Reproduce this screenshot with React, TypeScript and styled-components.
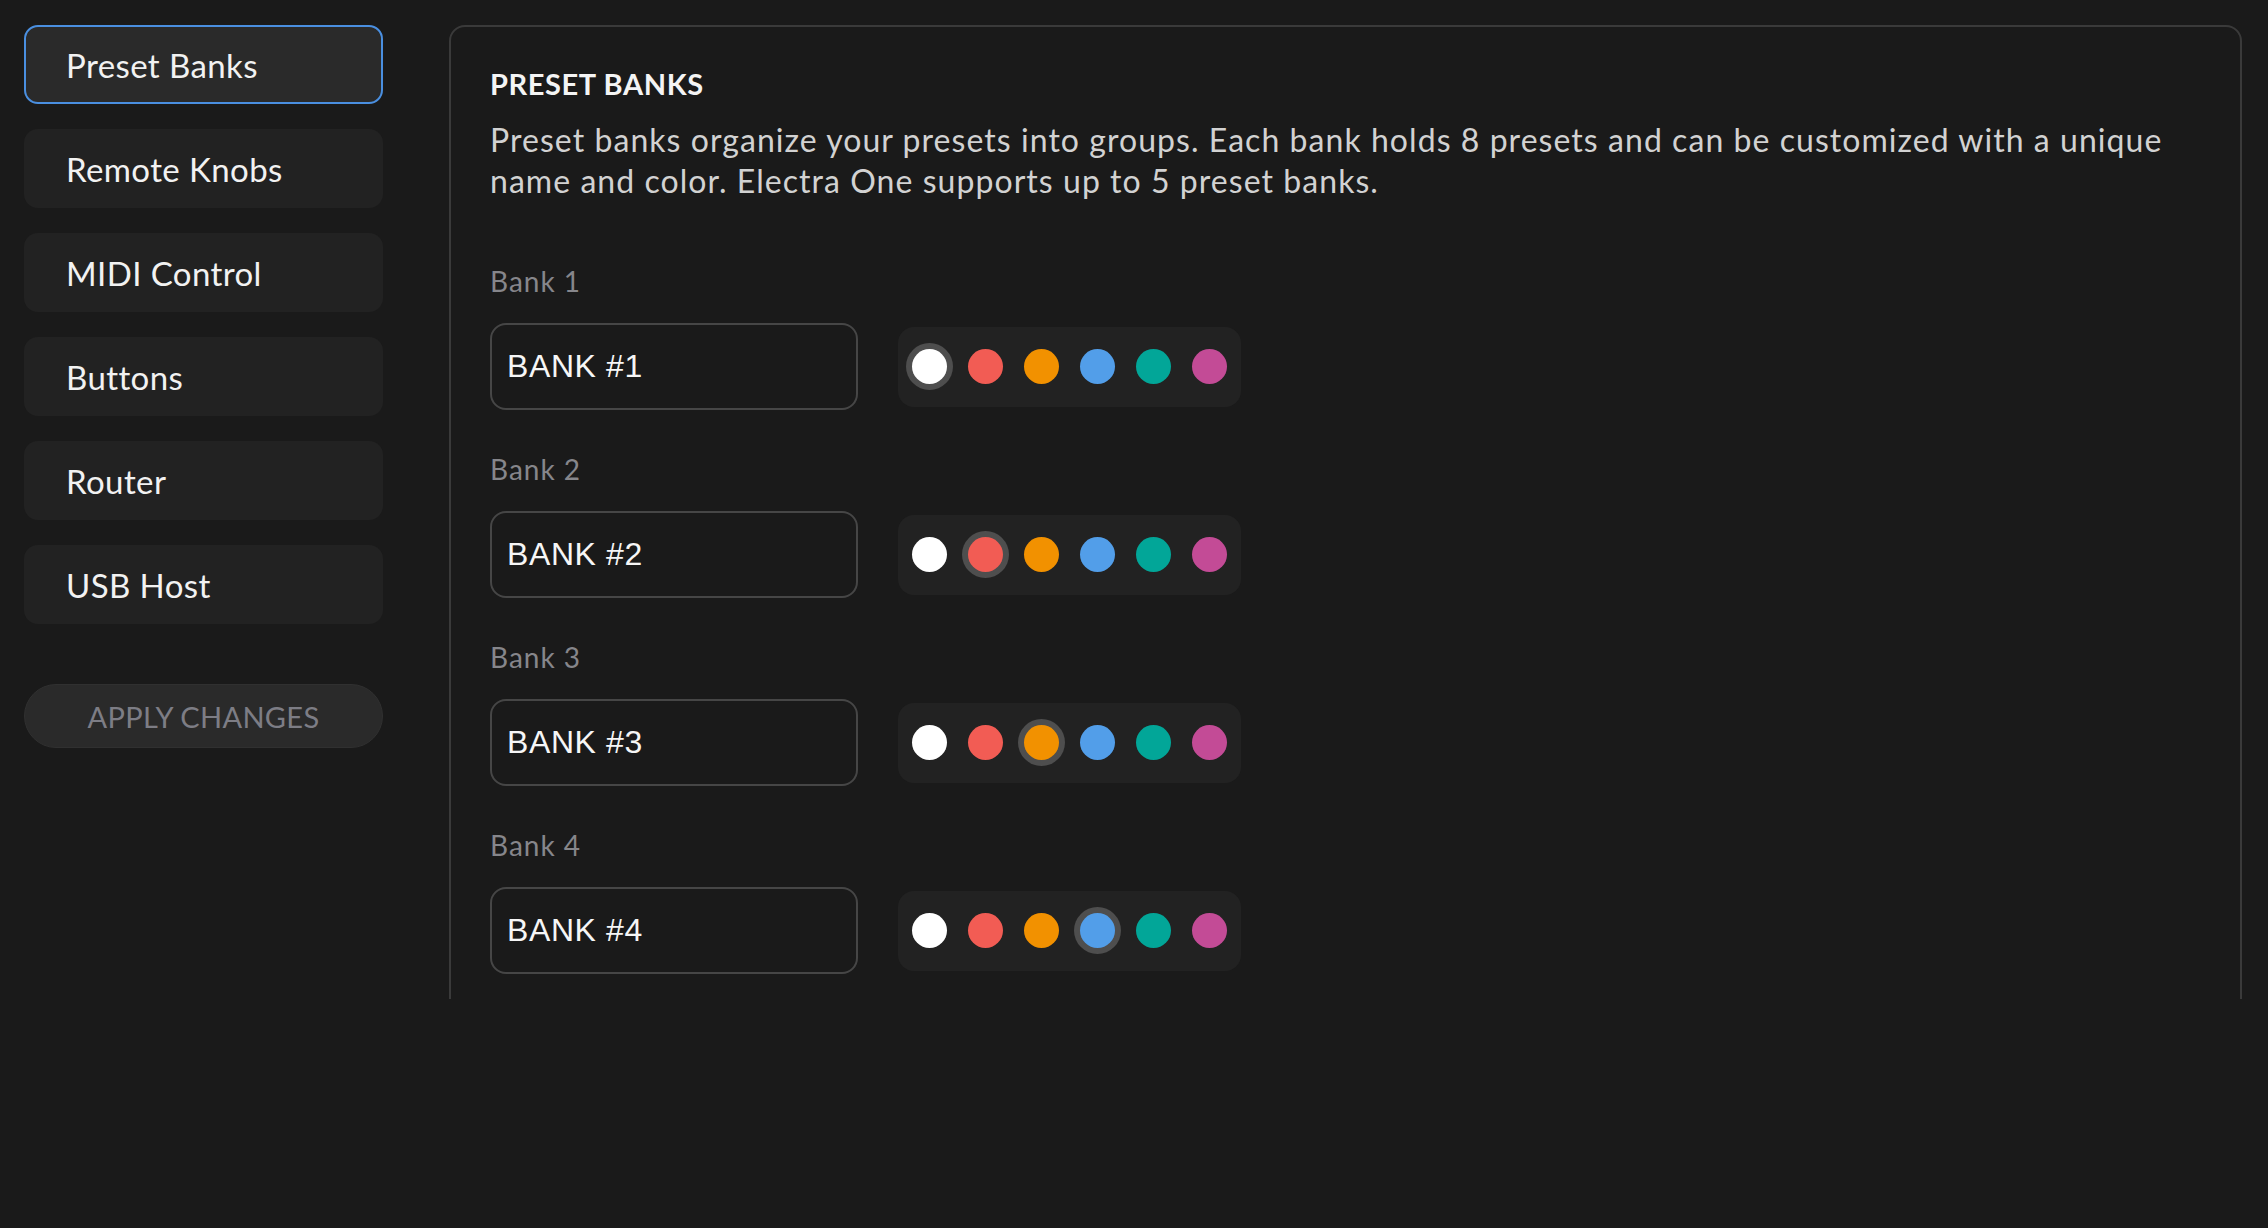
import { useState } from "react";
import styled, { createGlobalStyle } from "styled-components";

const GlobalStyle = createGlobalStyle`
  html, body {
    margin: 0;
    padding: 0;
    background: #1a1a1a;
  }
  body {
    font-family: Lato, "Noto Sans", sans-serif;
    color: #f0f0f0;
  }
`;

const COLORS = ["#ffffff", "#f25c54", "#f29100", "#529ee9", "#02a698", "#c34b96"];

const NAV = ["Preset Banks", "Remote Knobs", "MIDI Control", "Buttons", "Router", "USB Host"];

const initialBanks = [
  { name: "BANK #1", color: 0 },
  { name: "BANK #2", color: 1 },
  { name: "BANK #3", color: 2 },
  { name: "BANK #4", color: 3 },
];

const App = () => {
  const [active, setActive] = useState(0);
  const [banks, setBanks] = useState(initialBanks);

  const setColor = (bank: number, color: number) => {
    setBanks((prev) => prev.map((b, i) => (i === bank ? { ...b, color } : b)));
  };

  const setName = (bank: number, name: string) => {
    setBanks((prev) => prev.map((b, i) => (i === bank ? { ...b, name } : b)));
  };

  return (
    <>
      <GlobalStyle />
      <Layout>
        <Sidebar>
          {NAV.map((label, i) => (
            <NavItem key={label} active={i === active} onClick={() => setActive(i)}>
              {label}
            </NavItem>
          ))}
          <ApplyButton>APPLY CHANGES</ApplyButton>
        </Sidebar>

        <MainArea>
          <Panel>
            <Title>PRESET BANKS</Title>
            <Description>
              Preset banks organize your presets into groups. Each bank holds 8 presets and can
              be customized with a unique name and color. Electra One supports up to 5 preset
              banks.
            </Description>

            <BankList>
              {banks.map((bank, i) => (
                <BankBlock key={i}>
                  <BankLabel>Bank {i + 1}</BankLabel>
                  <BankRow>
                    <NameInput
                      value={bank.name}
                      onChange={(e) => setName(i, e.target.value)}
                    />
                    <Swatches>
                      {COLORS.map((c, ci) => (
                        <Swatch
                          key={c}
                          color={c}
                          selected={bank.color === ci}
                          onClick={() => setColor(i, ci)}
                        />
                      ))}
                    </Swatches>
                  </BankRow>
                </BankBlock>
              ))}
            </BankList>
          </Panel>
        </MainArea>
      </Layout>
    </>
  );
};

export default App;

const Layout = styled.div`
  display: flex;
  align-items: flex-start;
  gap: 66px;
  padding: 25px 26px 0 24px;
`;

const Sidebar = styled.nav`
  width: 359px;
  flex-shrink: 0;
  display: flex;
  flex-direction: column;
  gap: 25px;
`;

interface NavStyle {
  readonly active?: boolean;
}

const NavItem = styled.div<NavStyle>`
  box-sizing: border-box;
  height: 79px;
  display: flex;
  align-items: center;
  padding-left: 40px;
  border-radius: 14px;
  font-size: 33px;
  letter-spacing: 0.4px;
  color: #f2f2f2;
  cursor: pointer;
  background: ${({ active }) => (active ? "#2a2a2a" : "#222222")};
  border: 2px solid ${({ active }) => (active ? "#4a8fe0" : "transparent")};
`;

const ApplyButton = styled.button`
  margin-top: 35px;
  height: 64px;
  border-radius: 32px;
  border: 1px solid #303030;
  background: #2a2a2a;
  color: #7d7d85;
  font-family: Lato, "Noto Sans", sans-serif;
  font-size: 29px;
  letter-spacing: 0.3px;
  cursor: pointer;
`;

const MainArea = styled.main`
  flex: 1;
  height: 974px;
  overflow: hidden;
`;

const Panel = styled.section`
  border: 2px solid #3a3a3a;
  border-radius: 16px;
  padding: 40px 46px 40px 39px;
`;

const Title = styled.h2`
  margin: 0;
  font-size: 29px;
  line-height: 34px;
  font-weight: 700;
  letter-spacing: 0.6px;
  color: #f4f4f4;
`;

const Description = styled.p`
  margin: 18px 0 0;
  font-size: 32px;
  line-height: 41px;
  letter-spacing: 1.05px;
  color: #d2d2d2;
`;

const BankList = styled.div`
  margin-top: 63px;
  display: flex;
  flex-direction: column;
  gap: 42px;
`;

const BankBlock = styled.div`
  display: flex;
  flex-direction: column;
  gap: 25px;
`;

const BankLabel = styled.div`
  font-size: 28px;
  line-height: 34px;
  letter-spacing: 1px;
  color: #86868b;
`;

const BankRow = styled.div`
  display: flex;
  align-items: center;
  gap: 40px;
`;

const NameInput = styled.input`
  box-sizing: border-box;
  width: 368px;
  height: 87px;
  padding: 0 15px;
  border: 2px solid #464646;
  border-radius: 16px;
  background: #1a1a1a;
  color: #f6f6f6;
  font-family: "Liberation Sans", Arial, sans-serif;
  font-size: 32px;
  letter-spacing: 0.6px;
  outline: none;
`;

const Swatches = styled.div`
  box-sizing: border-box;
  width: 343px;
  height: 80px;
  padding: 0 14px;
  display: flex;
  align-items: center;
  gap: 21px;
  background: #222222;
  border-radius: 16px;
`;

interface SwatchStyle {
  readonly color: string;
  readonly selected?: boolean;
}

const Swatch = styled.div<SwatchStyle>`
  width: 35px;
  height: 35px;
  border-radius: 50%;
  flex-shrink: 0;
  cursor: pointer;
  background: ${({ color }) => color};
  box-shadow: ${({ selected }) => (selected ? "0 0 0 6px #4e4e4e" : "none")};
`;
